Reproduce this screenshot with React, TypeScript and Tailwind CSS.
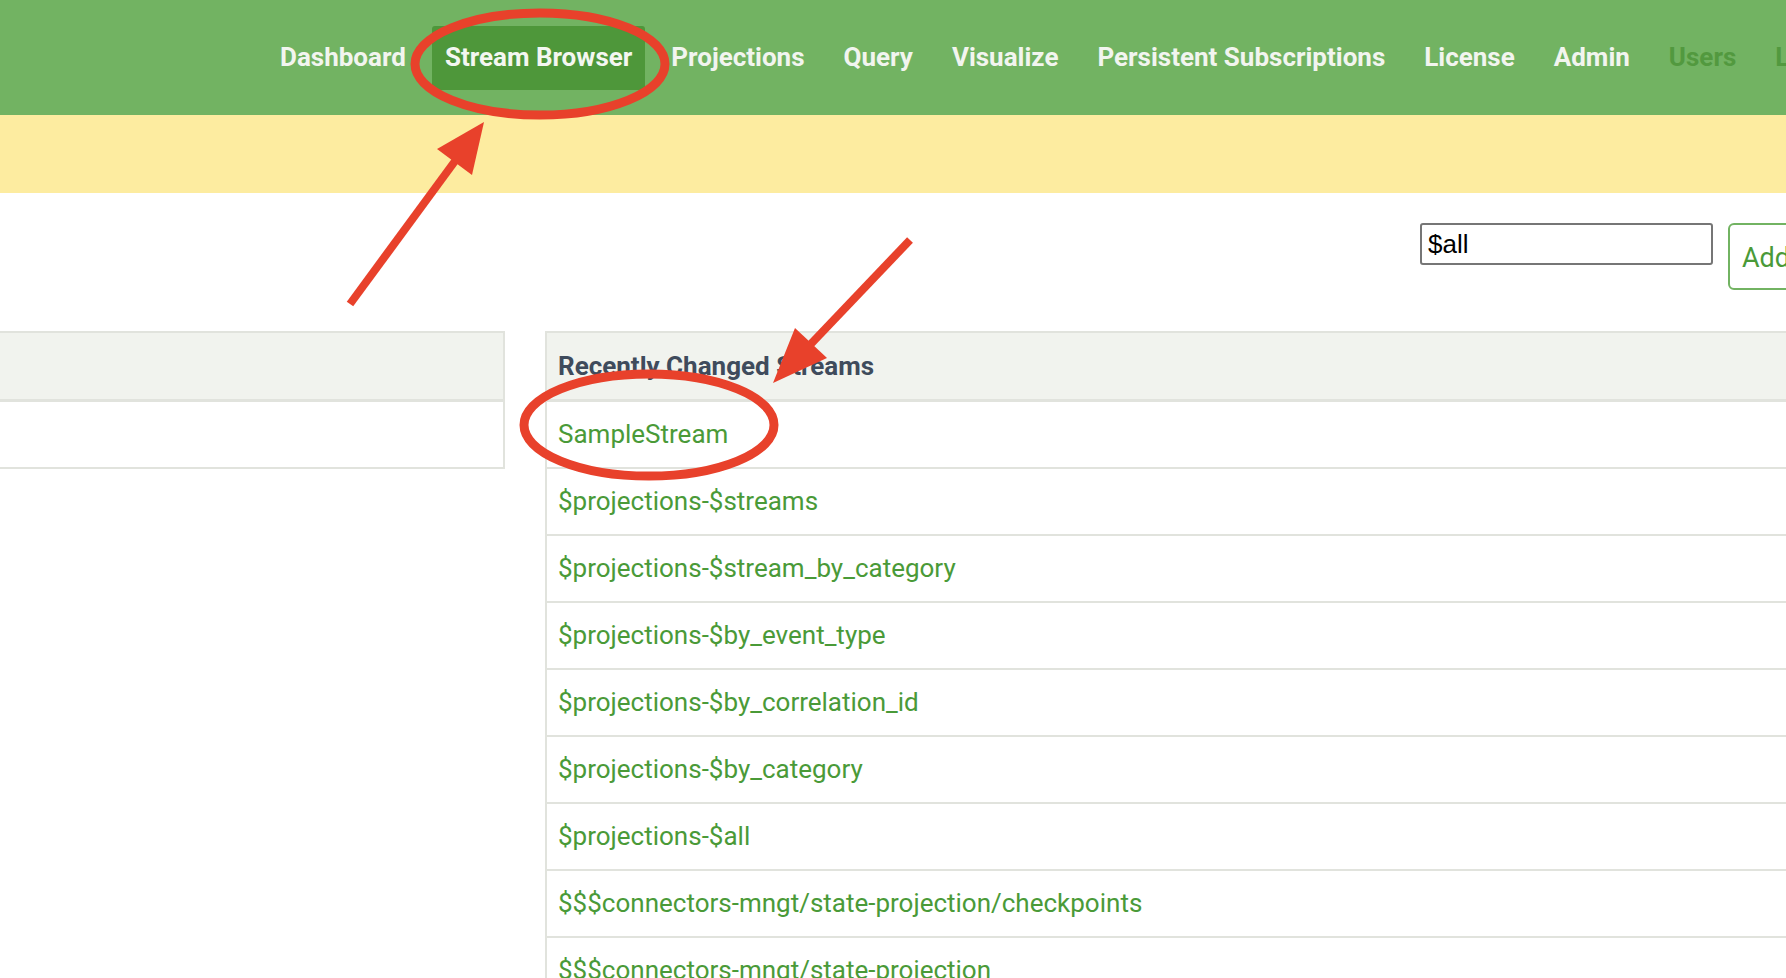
import React from "react";

const navItems = [
  { label: "Dashboard" },
  { label: "Stream Browser", active: true },
  { label: "Projections" },
  { label: "Query" },
  { label: "Visualize" },
  { label: "Persistent Subscriptions" },
  { label: "License" },
  { label: "Admin" },
  { label: "Users", dim: true },
  { label: "Logout", dim: true },
];

const streams = [
  "SampleStream",
  "$projections-$streams",
  "$projections-$stream_by_category",
  "$projections-$by_event_type",
  "$projections-$by_correlation_id",
  "$projections-$by_category",
  "$projections-$all",
  "$$$connectors-mngt/state-projection/checkpoints",
  "$$$connectors-mngt/state-projection",
];

export default function App() {
  return (
    <div
      className="relative w-[1786px] h-[978px] overflow-hidden bg-white"
      style={{ fontFamily: "Roboto, 'Noto Sans', sans-serif" }}
    >
      <nav className="h-[115px] bg-[#72b362] flex items-center pl-[267px] gap-[13px] whitespace-nowrap">
        {navItems.map((it) => (
          <div
            key={it.label}
            className={
              it.active
                ? "h-[64px] flex items-center px-[13px] rounded-[3px] bg-[#4e973a] text-[26px] font-bold text-[#f4f7f1]"
                : it.dim
                ? "h-[64px] flex items-center px-[13px] text-[26px] font-bold text-[#52993f]"
                : "h-[64px] flex items-center px-[13px] text-[26px] font-bold text-[#f2f5ef]"
            }
          >
            {it.label}
          </div>
        ))}
      </nav>
      <div className="h-[78px] bg-[#fdeca0]" />
      <div className="flex items-start gap-[15px] pl-[1420px] pt-[30px] whitespace-nowrap">
        <div
          className="w-[293px] h-[42px] border-2 border-[#767676] rounded-[3px] flex items-center pl-[6px] text-[26px] text-black shrink-0"
          style={{ fontFamily: "'Liberation Sans', Arial, sans-serif" }}
        >
          $all
        </div>
        <div className="h-[67px] border-2 border-[#72b362] rounded-[6px] flex items-center pt-[3px] px-[12px] text-[27px] text-[#4a9a38] shrink-0">
          Add Event
        </div>
      </div>
      <div className="flex items-start gap-[40px] mt-[41px]">
        <div className="-ml-[10px] w-[515px] shrink-0 border-2 border-[#e1e3dd]">
          <div className="h-[69px] bg-[#f1f3ee] border-b-[3px] border-[#e1e3dd]" />
          <div className="h-[65px]" />
        </div>
        <div className="flex-1 min-w-[1300px] border-2 border-[#e1e3dd]">
          <div className="h-[69px] bg-[#f1f3ee] border-b-[3px] border-[#e1e3dd] flex items-center pl-[11px] text-[26px] font-bold text-[#3f4b5c]">
            Recently Changed Streams
          </div>
          {streams.map((s) => (
            <div
              key={s}
              className="h-[67px] border-b-2 border-[#e1e3dd] flex items-center pl-[11px] text-[26px] text-[#4a9a38] whitespace-nowrap"
            >
              {s}
            </div>
          ))}
        </div>
      </div>
      <svg
        className="absolute inset-0 pointer-events-none"
        width="1786"
        height="978"
        viewBox="0 0 1786 978"
      >
        <g fill="none" stroke="#e8412b" strokeWidth="9">
          <ellipse cx="540" cy="64" rx="125" ry="51" />
          <ellipse cx="649" cy="425" rx="125" ry="51" />
        </g>
        <g stroke="#e8412b" strokeWidth="8" strokeLinecap="butt">
          <line x1="350" y1="304" x2="458" y2="157" />
          <line x1="910" y1="240" x2="808" y2="347" />
        </g>
        <g fill="#e8412b">
          <polygon points="484,122 472,175 437,149" />
          <polygon points="773,383 827,358 795,328" />
        </g>
      </svg>
    </div>
  );
}
